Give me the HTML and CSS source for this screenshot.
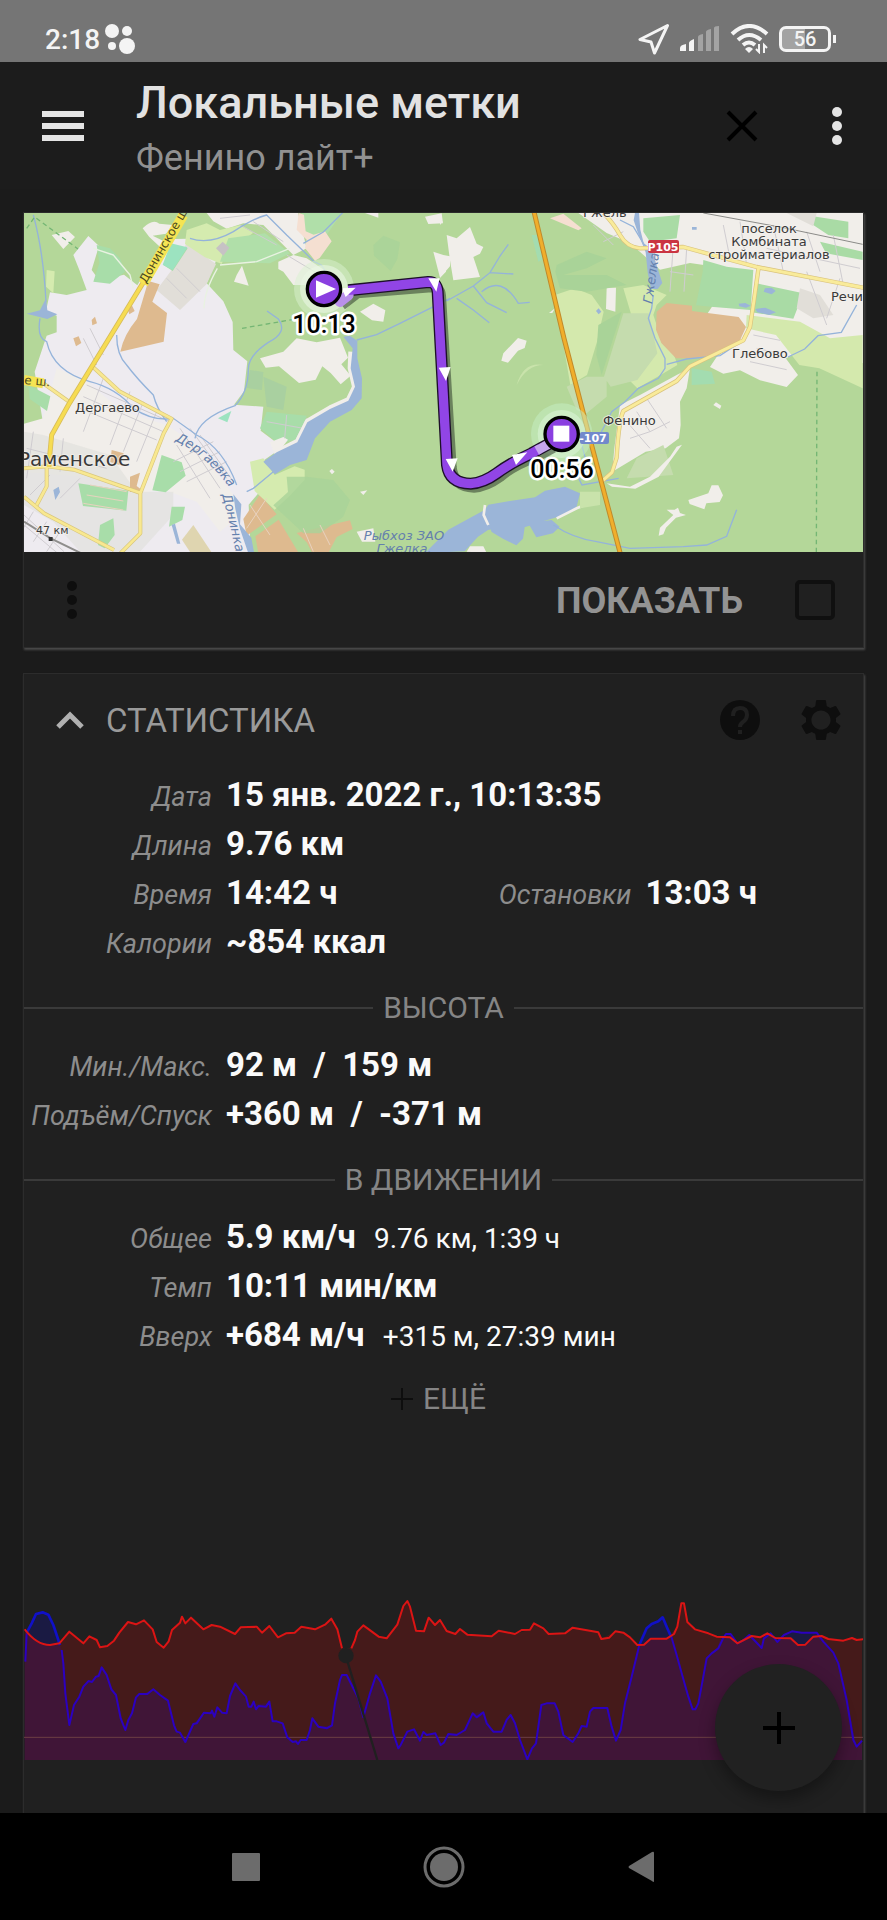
FILE: index.html
```html
<!DOCTYPE html>
<html lang="ru">
<head>
  <meta charset="UTF-8" />
  <meta name="viewport" content="width=device-width, initial-scale=1" />
  <title>Локальные метки</title>
  <link rel="stylesheet" href="styles.css">
</head>
<body>

  <div class="status-bar">
    <span class="clock">2:18</span>
    <svg class="dots" width="32" height="32" viewBox="0 0 32 32" fill="#f4f4f4">
      <circle cx="8" cy="8" r="7" />
      <circle cx="23" cy="8" r="5" />
      <circle cx="8" cy="23" r="4" />
      <circle cx="23" cy="23" r="8" />
    </svg>
    <div class="status-icons">
      <svg width="32" height="32" viewBox="0 0 32 32" fill="none" stroke="#f4f4f4" stroke-width="3" stroke-linejoin="round">
        <path d="M29.500 2.500 L2 16.500 L13 19 L16.500 30 Z" />
      </svg>
      <svg width="40" height="26" viewBox="0 0 40 26">
        <path d="M0 25v-3q0-3 6-4v7zM9 25v-8q0-2 5-4v12z" fill="#f4f4f4" />
        <path d="M18 25V11q0-2 5-3v17zM26 25V6q0-2 5-3v22zM34 25V2q0-2 5-2v25z" fill="#a3a3a3" />
      </svg>
      <svg width="39" height="30" viewBox="0 0 39 30" fill="none" stroke="#f4f4f4" stroke-width="4">
        <path d="M2 10Q19-6 37 10M8 16q11-10 23 0M13 21q6-5 12 0" />
        <path d="M15 25l4 4 4-4q-4-4-8 0z" fill="#f4f4f4" stroke="none" />
        <path d="M29 20v8l-3-3M34 29v-8l3 3" stroke-width="2" />
      </svg>
      <span class="battery">56</span>
    </div>
  </div>

  <header class="app-bar">
    <button class="icon-btn" aria-label="Меню">
      <svg width="42" height="30" viewBox="0 0 42 30" fill="#e4e4e4">
        <path d="M0 0h42v6H0zM0 12h42v6H0zM0 24h42v6H0z" />
      </svg>
    </button>
    <div class="titles">
      <h1>Локальные метки</h1>
      <p>Фенино лайт+</p>
    </div>
    <button class="icon-btn" aria-label="Закрыть">
      <svg width="32" height="32" viewBox="0 0 32 32" stroke="#000" stroke-width="4">
        <path d="M2 2l28 28M30 2L2 30" />
      </svg>
    </button>
    <button class="icon-btn" aria-label="Ещё">
      <svg width="10" height="38" viewBox="0 0 10 38" fill="#e4e4e4">
        <circle cx="5" cy="5" r="5" /><circle cx="5" cy="19" r="5" /><circle cx="5" cy="33" r="5" />
      </svg>
    </button>
  </header>

  <main>
    <section class="card map-card">
      <svg class="map" viewBox="0 0 839 339">
        <defs>
          <path id="derg" d="M151 228Q184 242 214 286" />
          <path id="don" d="M198 282Q206 310 214 350" />
        </defs>
        <g transform="translate(-4 -8) scale(0.33333)">
          <!-- forest -->
          <path fill="#b4d799" d="M0 0h2600v1060H0z" />
          <!-- town and fields in the west -->
          <path fill="#eeebf0" d="M90 262l50 8 60-15-22-60-18-45 45-57 32 30-22 72 22 30 75-16 40 32 30-50 50-88 70-2 88 62-30 72 50 54 28 62 2 84 42 34-10 90-30 40 88 6-8 72 66 50-50 34-38 28 20 70-34 40 6 150H12V664l58-4-26-160 36-108 30-10v-50l-32-14z" />
          <path fill="#f1eeea" d="M110 490l90 40 110 90 130 40 90 60 110 150 20 60-60 50-70-90-110-40-90 30-80-60-250-20V660l70-20z" />
          <path fill="#e0dfdb" d="M70 690l200 60 80 110 110 0 0 70-100 110H180l-80-90-88-50V680z" opacity=".6" />
          <path fill="#e1ded8" d="M500 115l88 62-28 60-80 78-70-60 45-60z" />
          <path fill="#f1eeea" d="M560 24l20 25 40 22 50-16 60 5 90 90 40-20-26-106zM95 90l50-12 20 18-35 36zM368 70q30-30 50-14l40 4-20 26-40 6 40 20-20 12-30-28z" />
          <path fill="#a8dda9" d="M230 120l40 10 30 30 15 40-45 36-50-6 18-56zM430 180l25-60 48 10-45 68z" />
          <path fill="#9ce3c0" d="M452 115l50 12-44 68-30-16z" />
          <path fill="#d5ebaf" d="M500 75l60-20 40 20 60-14 40 22-80 60-15 34-50-20-60-40zM80 195l24 4-4 66-22-20z" />
          <path fill="#b0dfa9" d="M625 100l110-15 75 60-60 30-150-5zM845 24h120l-55 80-60-15z" />
          <path fill="#c6c2c4" d="M588 130l20-20 20 18-18 24z" />
          <path fill="#f5dfd1" d="M836 24l-6 50 30 30-5 25 30 38 14-8 36-50-20-30-34 10-24-10-5-50z" />
          <path fill="#f1eeea" d="M775 170l45-20 40 10 60 40 20 20-40 20-80 0-30-40-15-8zM650 210l16-28 20 60-44-12zM720 460l70-20 40-40 60 12 70-14 24 60-20 20 28 34-30 26-30-34-25-20-20 40-50 10-60-50-40 4zM1020 320l40-24 36 20-6 34-34-4zM1240 140l30 10 20 4v30l-30 34zM1215 35l50-10 4 30-44 2zM1035 24h40v14z" />
          <path fill="#deba8f" d="M385 228l34 10-22 52 44 34-10 86-130 30q10-50 50-98zM160 400l16-6 8 20-16 10zM215 345l10-10 6 20-14 6zM322 310l12-12 10 20-16 10z" />
          <path fill="#deba8f" d="M330 815l30-12-10 40 20 16-40 2zM720 868l50 60-90 64-10-50zM706 994l70-50 60 100H715zM830 984l160-38 8 26-48 24-24 46-50 0-16-30zM275 735l36 10-10 36-30-10z" />
          <path fill="#a8dda9" d="M175 835l150 22-6 60-130-14zM25 540l66 34-10 44-52-36zM425 750l60 22 12 40-60 50-40-6zM455 905l40 0-8 40-40 20zM240 960l40-20 4 50-30 40-20-10zM740 620l120 12-24 70-60 14-56-46z" />
          <path fill="#9ce3c0" d="M594 640l40-22-12 34z" />
          <path fill="#dfd5b0" d="M520 960l56 84h-64l-26-40z" />
          <path fill="#d5ebaf" d="M690 770l40-10 34 50 60-26 30 10 0 30-46 50-44 40-60-56z" />
          <path fill="#a9d398" d="M800 815l60 0 80 10 50 60-20 50-70 50-50 0-90-84 44-40zM1060 120l30-28 50 20-8 50-20 36-50-46z" opacity=".8" />
          <path fill="#a9d0a0" d="M690 495l40 6-4 54-46-6zM730 515l70 30-10 70-50-10z" />
          <path fill="#f1eeea" d="M1020 860l22-4-12 14zM928 798l8-6 8 8-8 8zM750 712l40-16 14 8-38 50zM1010 980l50-10 6 40-40 0z" />

          <!-- street grid -->
          <g fill="none" stroke="#cfccd0" stroke-width="3">
            <path d="M200 540l250 110M190 575l240 105M180 610l230 95M330 560l-60 160M370 590l-60 150M410 620l-60 150M250 520l-60 160M480 670l120 180M510 670l110 150M540 690l100 140M460 770l120-60M480 800l120-60M500 830l120-60M470 720l100 160M40 680l-20 140M130 700l-10 100M20 730l240 60M30 870l60-60M120 880l60-60M190 400l40 80M210 370l40 80M440 220l60 60M470 190l70 70M860 640l-30 60M800 630l-6 70M740 650l110 20" />
            <path d="M12 930l120 110M12 960l100 84M40 920l-30 50M80 950l-40 60M120 980l-40 60M600 40l90-10M660 60l110 60M700 50l90 60M800 150l100 60" />
            <path d="M210 840l110 20M200 870l110 18M190 895l120 20M690 900l60 90M740 880l-60 90M850 970l30 70M900 960l30 60" stroke="#e8d2bf" />
          </g>
          <path fill="none" stroke="#8f8e8c" stroke-width="6" d="M12 950l80 50 90 44" />

          <!-- water -->
          <g fill="none" stroke="#94b3da" stroke-width="4">
            <path d="M40 30q30 110 38 260M60 340q-10 60 20 70 20 90 130 120 80 20 130 80 60 40 120 30l70 50q80 40 120 150M290 390q0 60 30 90 30 40 80 90 10 40 40 80M525 700q10-60 120-98 40-40 40-110 0-40 60-80 60-30 30-70l-34-24M510 100q60 20 130-20 60-40 100-50l60 60 46 44 36 36 22 10 40 60M850 115l60-34 60-60M1010 405l60-16 70-34 90-45 60-30M760 800l-60 50-20 10" />
          </g>
          <path fill="none" stroke="#f1eeea" stroke-width="14" stroke-linejoin="round" d="M992 440L990 490 1003 545 985 583 930 608 862 648 832 708 770 740" />
          <path fill="#9bb5d8" d="M970 395L990 392 1012 408 1012 460 1026 520 1025 580 995 615 930 650 885 700 860 765 810 780 765 808 730 770 770 742 832 712 862 652 930 612 985 587 1005 545 992 490 998 430z" />
          <path fill="#9bb5d8" d="M78 280l4 36 30 12-30 14-62-16 40-10zM640 868l24 30-4 60 34 40 8 44h-18l-24-70-14-60zM100 855l16-10 4 16-14 24zM455 960l10-4 16 60-10 0z" />
          <path fill="#9bb5d8" d="M1215 1044l70-70 110-60 10-15 60-10 80-12 30-20 60-12 45 20-10 40-26 22-70 20-60 20-20-6-40 4-50 10-30 20-40 44zM1405 955l50-10 60 16-6 40-20 20-40-20-34-20zM1525 955l70-10 24 20-20 20-50 12z" />
          <path fill="none" stroke="#f1eeea" stroke-width="8" d="M1395 900l-4 30 14 30M1610 940l60-30 50-20" />

          <!-- eastern half -->
          <g transform="translate(1260 0)">
            <path fill="#f1eeea" d="M20 90l30 10 40-34 20 50 20 10-10 20-20 10 20 60-80 10-10-60zM190 445l44-46 26 8-6 22-20 8-30 36-20-6zM415 24h400l455 0v450h-30l-80-60-60 40-30-10-60 30-40-30-120-10-80-60 120-180-140-20-90 20-90-80-70-30zM500 248l28 0-2 72-28-8z" />
            <path fill="#f1eeea" d="M540 600l60-30 110-60 40-20-10 60-20 40 2 70-5 40-40 30-60 10-100 60 6-70z" />
            <path fill="#f1eeea" d="M900 400l40-30 90 20 0 60 44 60-34 36-80-20-60-30-50 10-40-20 20-30z" />
            <path fill="#d4e9ad" d="M345 270l60-20 50 20 36 50-20 90-30 100-50 30zM550 250l60-10 70 30-30 30-10 30 20 60 36 40 16 50-50 30-70 40-60-60 60-100zM920 330l160 20 90 50 98-10v160l-130-60-60-10-70-90-90-20z" />
            <path fill="#a9dba5" d="M790 165l70 20 80 10-8 120-120-10-44-4 20-100zM950 235l140 30-30 76-130-20zM610 40l110-10-10 70-80 10-20-30zM1095 30l130 20 0 50-60-10-60-40zM1140 110l128 30v25l-110-20z" />
            <path fill="#c5dcae" d="M550 325l76 0 26 120-60 80-80 20-20-30zM380 545l60-30 60 0 0 60-60 50-30-10zM590 760l80-40 30 90-140 10z" />
            <path fill="#a9d398" d="M475 360l70-40-60 190-16-60zM350 180l90-40 60 20-60 30-70 20 130 0 60 30-120 20-80-10-14-50z" />
            <path fill="#a3dcb0" d="M755 490l60 10 10 36-70 4zM275 90l20 0 20 70-20 10z" />
            <path fill="#f5dfd1" d="M330 40l40-14 55 44-10 6z" />
            <path fill="#deba8f" d="M650 320l30-26 76 8v16l140 18 22 30-20 44-100 50-90 0-44-46-16-40z" />
            <path fill="#e1ded8" d="M1040 24h90l-10 40zM1080 250l60 20 40 60-60 10-50-30z" />
            <path fill="#f1eeea" d="M745 885l60-20 10-24 20 0 14 30-10 20-40 4-6 18-44-16zM680 914l24 0 10-6 6 16 18 6-30 8-30 30-8 20-14 4 4-24 40-38zM820 600l8-8 16 10-4 10zM500 835l70 10 60-30 60-60 20-30 16-6-70 96-70 36-70-6zM80 1040l10-16 40 0 10 20zM0 40l8 10-8 10zM0 160l16 0 2 40-18 18zM345 310l-8 14-10 0z" />
            <path fill="#c9e3ab" d="M230 540q20-70 80-60-50 0-80 60zM420 860l60 0 0 40-60 10z" />

            <g fill="none" stroke="#cfccd0" stroke-width="3">
              <path d="M700 120l-10 140M740 130l-8 130M690 200l70 10M460 60l60 60M490 110l60-30M850 60l20 100M900 50l20 130M1000 60l30 140M1100 80l40 120M1180 90l30 150M980 130l280 60M1100 200l60 160M1200 220l-40 120M940 390l80 16M950 430l70 16M930 470l110 24M590 620l40 60 60-30M560 650l70 80M620 580l60 90M570 700l60-20" />
            </g>
            <path fill="none" stroke="#8b8b88" stroke-width="3" d="M790 24l240 44 238 50" />

            <g fill="none" stroke="#94b3da" stroke-width="4">
              <path d="M20 288l80-45 50-40 30-50 25-35M150 203l70 4M100 243l40 50 60 30M125 260q60-50 110 35l34-3M50 280l50 35 48 38M540 45l40 20 30 50M640 270l-5 40-10 30 20 60 30 60 0 30-20 30-60 30-40 40-40 30-20 40-16 30M680 478l60-16 100-10 60-40M1250 300l-46 82-70 10-40 40-50 24M420 700l16 60-20 60 10 20 110-20M340 960q60 40 130 50l100 20 160-5 70-5 60-26 30-80" />
            </g>
            <path fill="#9bb5d8" d="M585 24h12l4 50 10 40 24 20 32 100-14 18-20 0-10-50-6-60-24-60-12-36zM975 250l20-2 12 10-12 10-24-8zM896 296l20-2 16 8-14 6-20-4zM946 312l30-4 32 14-20 8-36-8zM468 318l8-8 8 10-8 8zM756 66h14v8h-14z" />

            <!-- roads -->
            <g fill="none" stroke-linejoin="round">
              <path stroke="#d9c27c" stroke-width="13" d="M490 24q30 30 50 66 20 36 60 40l130-4 220 60 320 62M956 186l-14 100-12 80-20 40-160 78-40 44-160 90q-14 30-20 140l-14 44-34 30" />
              <path stroke="#f9eb9a" stroke-width="9" d="M490 24q30 30 50 66 20 36 60 40l130-4 220 60 320 62M956 186l-14 100-12 80-20 40-160 78-40 44-160 90q-14 30-20 140l-14 44-34 30" />
              <path stroke="#c08a2b" stroke-width="15" d="M282 20l90 380 80 310 90 340" />
              <path stroke="#f0ae2c" stroke-width="9" d="M282 20l90 380 80 310 90 340" />
              <path stroke="#74b674" stroke-width="4" stroke-dasharray="14 10" d="M1131 500l-2 544" />
            </g>
          </g>

          <g fill="none" stroke-linejoin="round">
            <path stroke="#d9c67c" stroke-width="12" d="M70 535l78 56M218 485l80 74 157 82-24 44-70 180 0 120-60 60M12 790l70-6 80 10 200 70M12 875l60 50 210 110M80 784l0 60-30 56" />
            <path stroke="#f8e890" stroke-width="8" d="M70 535l78 56M218 485l80 74 157 82-24 44-70 180 0 120-60 60M12 790l70-6 80 10 200 70M12 875l60 50 210 110M80 784l0 60-30 56" />
            <path stroke="#d8bd5a" stroke-width="15" d="M370 232L148 595 95 690 86 785" />
            <path stroke="#f6dc52" stroke-width="10" d="M370 232L148 595 95 690 86 785" />
            <path stroke="#f5e453" stroke-width="30" d="M370 236L490 30M12 525l58 10" />
            <path stroke="#74b674" stroke-width="4" stroke-dasharray="14 10" d="M20 70l24-34 130 96M666 370l150-26" />
            <path stroke="#e9f2e2" stroke-width="4" d="M600 180l110-10 100-40M552 310q0-50 40-120M220 130l60 20 50 60 10 40" />
          </g>

          <!-- track -->
          <circle cx="912" cy="252" r="90" fill="#d9f2cf" opacity=".5" />
          <circle cx="912" cy="252" r="72" fill="#e9f6e4" opacity=".6" />
          <circle cx="1625" cy="687" r="92" fill="#c5efc5" opacity=".5" />
          <circle cx="1625" cy="687" r="72" fill="#d9f4d6" opacity=".6" />
          <g fill="none" stroke-linejoin="round">
            <path stroke="#3b4a35" stroke-opacity=".6" stroke-width="32" d="M965 300L1012 264 1234 246Q1260 246 1262 272L1294 786Q1300 845 1362 847 1400 844 1440 815 1480 780 1550 755L1600 728" />
            <path stroke="#1d1029" stroke-width="36" d="M985 256L1225 231Q1250 230 1253 260L1281 780Q1288 835 1352 836 1390 834 1430 805 1470 775 1535 745L1590 715" />
            <path stroke="#b990ea" stroke-width="32" stroke-linecap="round" d="M960 290L985 270" />
            <path stroke="#9145e6" stroke-width="28" d="M985 256L1225 231Q1250 230 1253 260L1281 780Q1288 835 1352 836 1390 834 1430 805 1470 775 1535 745L1560 731" />
            <path stroke="#c6a5ee" stroke-width="28" d="M1550 737L1590 715" />
          </g>
          <path fill="#fff" d="M965 250l42-2-30 28zM1225 220l34 0-10 40zM1256 488l36-2-14 42zM1277 762l36-2-15 40zM1476 750l46-8-34 38z" />
          <circle cx="912" cy="252" r="50" fill="#8a3fe0" stroke="#000" stroke-width="10" />
          <path fill="#fff" d="M888 226l60 26-60 26z" />
          <circle cx="1625" cy="687" r="50" fill="#8a3fe0" stroke="#000" stroke-width="10" />
          <path fill="#fff" d="M1600 662h48v48h-48z" />
          <path fill="#333" d="M86 996h12v12h-12z" />
        </g>

        <g class="road-sign">
          <rect x="624" y="27" width="31" height="13" rx="2" fill="#ca3442" />
          <text x="639" y="38" text-anchor="middle">Р105</text>
          <rect x="556" y="219" width="29" height="12" rx="2" fill="#7289cb" />
          <text x="569" y="229" text-anchor="middle">-107</text>
        </g>
        <g class="place">
          <text x="51" y="199">Дергаево</text>
          <text x="708" y="145">Глебово</text>
          <text x="579" y="212">Фенино</text>
          <text x="807" y="88">Речи</text>
          <text x="559" y="4">Гжель</text>
          <text x="745" y="20" text-anchor="middle">поселок</text>
          <text x="745" y="33" text-anchor="middle">Комбината</text>
          <text x="745" y="46" text-anchor="middle">стройматериалов</text>
          <text class="km" x="12" y="321">47 км</text>
          <text class="town" x="-6" y="253">Раменское</text>
        </g>
        <g class="road-name">
          <text transform="translate(122 71) rotate(-60)">Донинское ш.</text>
          <text transform="translate(0 171) rotate(5)">е ш.</text>
        </g>
        <g class="river">
          <text><textPath href="#derg">Дергаевка</textPath></text>
          <text><textPath href="#don">Донинка</textPath></text>
          <text transform="translate(628 91) rotate(-82)">Гжелка</text>
          <text x="380" y="327" text-anchor="middle">Рыбхоз ЗАО</text>
          <text x="380" y="340" text-anchor="middle">Гжелка.</text>
        </g>
        <g class="time">
          <text x="300" y="120">10:13</text>
          <text x="538" y="265">00:56</text>
        </g>
      </svg>
      <div class="map-actions">
        <button class="icon-btn" aria-label="Действия">
          <svg width="10" height="38" viewBox="0 0 10 38" fill="#0e0e0e">
            <circle cx="5" cy="5" r="5" /><circle cx="5" cy="19" r="5" /><circle cx="5" cy="33" r="5" />
          </svg>
        </button>
        <label for="show">ПОКАЗАТЬ</label>
        <input type="checkbox" id="show" />
      </div>
    </section>

    <section class="card stats">
      <div class="stats-head">
        <button class="collapse">
          <svg width="28" height="18" viewBox="0 0 28 18" fill="none" stroke="#b0b0b0" stroke-width="5">
            <path d="M2 16L14 4l12 12" />
          </svg>
          СТАТИСТИКА
        </button>
        <button class="icon-btn" aria-label="Справка">
          <svg width="42" height="42" viewBox="0 0 42 42">
            <circle cx="21" cy="21" r="20" fill="#0e0e0e" />
            <path d="M14 17q0-8 7-8t7 7q0 4-4 7-3 2-3 5" fill="none" stroke="#202020" stroke-width="4" />
            <path d="M19 31h4v4h-4z" fill="#202020" />
          </svg>
        </button>
        <button class="icon-btn" aria-label="Настройки">
          <svg width="48" height="48" viewBox="0 0 24 24" fill="#0e0e0e">
            <path d="M19.430 12.980c.04-.32.07-.64.07-.98s-.03-.66-.07-.98l2.110-1.650c.19-.15.24-.42.12-.64l-2-3.460c-.12-.22-.39-.3-.61-.22l-2.490 1c-.52-.4-1.080-.73-1.690-.98l-.38-2.650C14.460 2.180 14.250 2 14 2h-4c-.25 0-.46.18-.49.42l-.38 2.650c-.61.25-1.170.59-1.690.98l-2.490-1c-.23-.09-.49 0-.61.22l-2 3.460c-.13.22-.07.49.12.64l2.110 1.650c-.04.32-.07.65-.07.98s.03.66.07.98l-2.110 1.650c-.19.15-.24.42-.12.64l2 3.460c.12.22.39.3.61.22l2.490-1c.52.4 1.080.73 1.690.98l.38 2.650c.03.24.24.42.49.42h4c.25 0 .46-.18.49-.42l.38-2.650c.61-.25 1.170-.59 1.690-.98l2.490 1c.23.09.49 0 .61-.22l2-3.460c.12-.22.07-.49-.12-.64l-2.110-1.650zM12 16.800c-2.600 0-4.800-2.200-4.800-4.800s2.200-4.800 4.800-4.800 4.800 2.200 4.800 4.800-2.200 4.800-4.800 4.800z" />
          </svg>
        </button>
      </div>

      <dl>
        <div class="row"><dt>Дата</dt><dd>15 янв. 2022 г., 10:13:35</dd></div>
        <div class="row"><dt>Длина</dt><dd>9.76 км</dd></div>
        <div class="pair">
          <div class="row"><dt>Время</dt><dd>14:42 ч</dd></div>
          <div class="row"><dt>Остановки</dt><dd>13:03 ч</dd></div>
        </div>
        <div class="row"><dt>Калории</dt><dd>~854 ккал</dd></div>
      </dl>

      <h2>ВЫСОТА</h2>
      <dl>
        <div class="row"><dt>Мин./Макс.</dt><dd>92 м&nbsp; /&nbsp; 159 м</dd></div>
        <div class="row"><dt>Подъём/Спуск</dt><dd>+360 м&nbsp; /&nbsp; -371 м</dd></div>
      </dl>

      <h2>В ДВИЖЕНИИ</h2>
      <dl>
        <div class="row"><dt>Общее</dt><dd>5.9 км/ч <small>9.76 км, 1:39 ч</small></dd></div>
        <div class="row"><dt>Темп</dt><dd>10:11 мин/км</dd></div>
        <div class="row"><dt>Вверх</dt><dd>+684 м/ч <small>+315 м, 27:39 мин</small></dd></div>
      </dl>

      <button class="more">
        <svg width="22" height="22" viewBox="0 0 22 22" stroke="#0e0e0e" stroke-width="2">
          <path d="M11 0v22M0 11h22" />
        </svg>
        ЕЩЁ
      </button>

      <svg class="chart" viewBox="0 0 839 170">
        <g transform="translate(-24 -10) scale(0.33333)" stroke-width="6" stroke-linejoin="round">
          <!-- speed -->
          <path fill="#00f" fill-opacity=".16" d="M74 540V245L80 160 108 102 128 96 145 104 160 135 185 210 208 435 222 375 250 320 288 290 305 262 348 345 376 450 408 352 460 328 504 362 530 455 556 486 580 432 612 398 680 400 690 348 706 310 746 376 808 368 818 424 848 430 866 476 894 490 920 478 937 415 955 440 996 436 1005 370 1026 285 1040 285 1075 355 1090 412 1110 340 1128 286 1142 305 1162 355 1180 460 1195 505 1222 455 1242 448 1260 482 1306 460 1322 495 1345 462 1390 455 1418 400 1450 395 1475 450 1505 455 1532 405 1556 465 1582 538 1608 490 1624 375 1664 368 1692 465 1718 486 1765 436 1774 385 1822 384 1848 482 1865 440 1886 330 1912 220 1945 140 1988 112 2030 225 2080 390 2095 370 2122 230 2150 208 2165 165 2190 162 2210 190 2248 165 2285 202 2305 160 2332 186 2376 154 2450 158 2510 235 2548 395 2570 500 2586 480V540z" />
          <!-- altitude -->
          <path fill="#f00" fill-opacity=".17" d="M74 540V148Q110 195 150 195L178 190 208 155 250 190 268 169 290 180 300 202 322 198 342 182 384 126 408 133 432 121 458 148 470 186 491 203 506 184 516 150 540 128 546 110 556 130 573 113 610 148 635 135 660 140 705 162 722 142 770 140 786 158 808 138 834 172 858 160 884 158 904 140 945 148 975 134 994 116 1012 148 1026 205 1054 205 1072 155 1090 136 1136 170 1160 175 1192 134 1210 78 1222 63 1236 100 1248 152 1272 154 1286 113 1305 135 1320 120 1345 155 1366 162 1380 147 1402 164 1475 169 1496 152 1545 162 1590 149 1602 130 1646 162 1695 160 1718 143 1795 157 1804 177 1846 154 1870 158 1912 195 1932 194 1952 176 2000 176 2032 140 2044 70 2052 70 2062 126 2085 148 2150 170 2190 172 2212 190 2255 168 2280 172 2302 160 2326 174 2372 175 2394 195 2416 194 2440 170 2465 168 2485 177 2530 182 2556 174 2586 178V540z" />
          <path fill="none" stroke="#6b3f44" stroke-width="3" d="M72 472H2590" />
          <path fill="none" stroke="#2b00c0" d="M76 245L80 160M185 210L190 250 196 340 208 435 222 375 238 350 250 320 266 303 276 306 288 290 296 288 305 262 320 285 334 328 348 345 362 415 376 450 385 420 396 400 408 352 418 342 442 342 460 328 480 345 504 362 522 436 530 455 540 458 556 486 580 432 590 430 612 398 632 400 636 392 643 410 652 382 666 398 680 400 690 348 706 310 720 330 738 350 746 380 754 380 761 365 768 388 776 378 798 380 808 365 818 424 830 424 848 430 862 472 878 486 888 484 894 492 902 480 920 480 930 450 937 415 955 440 980 445 996 436 1005 370 1020 300 1026 285 1040 285 1055 315 1075 355 1090 412 1110 340 1128 286 1142 305 1162 355 1180 460 1195 505 1202 495 1222 455 1242 448 1260 482 1270 456 1280 465 1306 460 1322 495 1332 488 1345 462 1370 465 1395 450 1418 400 1430 412 1450 397 1460 430 1480 455 1505 455 1520 420 1532 405 1545 430 1560 480 1582 538 1596 505 1608 490 1624 375 1640 370 1664 370 1675 395 1690 465 1718 486 1735 460 1745 438 1760 440 1770 395 1780 384 1822 384 1835 440 1848 482 1862 450 1875 370 1895 290 1918 195M2014 170L2030 225 2048 290 2065 350 2078 388 2086 388 2095 370 2110 290 2120 235 2135 220 2155 205 2168 178" />
          <path fill="none" stroke="#1010c8" stroke-width="8" d="M80 158L95 130 108 102 128 97 145 104 160 135 180 195M1918 195L1940 145 1955 132 1975 124 1988 112 2000 140 2014 172" />
          <path fill="none" stroke="#2b00c0" d="M2168 178L2178 162 2192 162 2212 190 2228 182 2248 165 2285 204 2292 175 2312 160 2332 186 2352 165 2376 154 2405 158 2450 158 2470 185 2500 218 2515 250 2540 360 2560 480 2570 500 2586 482" />
          <path fill="none" stroke="#dc1414" d="M74 148Q110 195 150 195L178 190 208 155 250 190 268 169 290 180 300 202 322 198 342 182 358 158 384 126 408 133 432 121 458 148 470 186 491 203 506 184 516 150 540 128 546 110 556 130 573 113 610 148 635 135 660 140 705 162 722 142 770 140 786 158 808 138 834 172 858 160 884 158 904 140 945 148 975 134 994 116 1012 148 1026 205M1054 205L1065 180 1072 155 1090 136 1136 170 1160 175 1192 134 1210 78 1222 63 1230 80 1248 152 1272 154 1286 113 1305 135 1320 120 1340 153 1366 162 1380 147 1402 164 1475 169 1496 152 1545 162 1565 150 1590 149 1602 130 1630 145 1646 162 1695 160 1718 143 1795 157 1804 177 1828 173 1846 154 1870 158 1890 172 1912 195 1932 194 1952 176 2000 176 2022 162 2032 140 2044 70 2052 70 2062 126 2085 148 2125 160 2150 170 2190 172 2212 190 2255 168 2280 172 2302 160 2326 174 2372 175 2394 195 2416 194 2440 170 2465 168 2485 177 2530 182 2556 174 2570 180 2590 178" />
          <path stroke="#202020" stroke-width="7" d="M1038 230L1132 540" />
          <circle cx="1038" cy="227" r="23" fill="#202020" />
        </g>
      </svg>
    </section>

    <button class="fab" aria-label="Добавить">
      <svg width="32" height="32" viewBox="0 0 32 32" stroke="#000" stroke-width="4">
        <path d="M16 0v32M0 16h32" />
      </svg>
    </button>
  </main>

  <nav class="system-nav">
    <button aria-label="Недавние">
      <svg width="42" height="42" viewBox="0 0 42 42" fill="#6c6c6c"><rect x="7" y="7" width="28" height="28" rx="1" /></svg>
    </button>
    <button aria-label="Домой">
      <svg width="42" height="42" viewBox="0 0 42 42" fill="#6c6c6c">
        <circle cx="21" cy="21" r="14" />
        <circle cx="21" cy="21" r="19" fill="none" stroke="#6c6c6c" stroke-width="3" />
      </svg>
    </button>
    <button aria-label="Назад">
      <svg width="42" height="42" viewBox="0 0 42 42" fill="#6c6c6c"><path d="M33 7v28q0 2-2 0L8 22q-1-1 0-2L31 6q2-1 2 1z" /></svg>
    </button>
  </nav>

</body>
</html>
```

FILE: styles.css
```css
/* Base */
* {
  box-sizing: border-box;
}
body {
  margin: 0;
  min-height: 100vh;
  display: flex;
  flex-direction: column;
  background: #1b1b1b;
  color: #fafafa;
  font-family: Roboto, "Open Sans", sans-serif;
}
button {
  border: none;
  background: none;
  padding: 0;
  color: inherit;
  font: inherit;
  cursor: pointer;
}
svg {
  display: block;
  flex: none;
}

/* Status bar */
.status-bar {
  display: flex;
  align-items: center;
  height: 62px;
  padding: 16px 56px 0 45px;
  background: #757575;
  color: #f4f4f4;
}
.clock {
  font-size: 28px;
  font-weight: 500;
}
.dots {
  margin-left: 4px;
}
.status-icons {
  display: flex;
  align-items: center;
  gap: 10px;
  margin-left: auto;
}
.battery {
  position: relative;
  width: 52px;
  height: 26px;
  border: 3px solid #f4f4f4;
  border-radius: 7px;
  background: linear-gradient(90deg, #a3a3a3 50%, transparent 50%);
  font-size: 20px;
  font-weight: 500;
  line-height: 20px;
  text-align: center;
}
.battery::after {
  content: "";
  position: absolute;
  right: -8px;
  top: 6px;
  width: 3px;
  height: 8px;
  background: #f4f4f4;
}

/* App bar */
.app-bar {
  display: flex;
  align-items: center;
  height: 127px;
  padding: 0 31px 0 42px;
  background: #1c1c1c;
}
.icon-btn {
  display: flex;
  align-items: center;
  justify-content: center;
  min-width: 38px;
}
.titles {
  flex: 1;
  margin-left: 52px;
  padding-top: 8px;
}
h1 {
  margin: 0;
  font-size: 45px;
  font-weight: 500;
  line-height: 56px;
  color: #e2e2e2;
}
.titles p {
  margin: 0;
  font-size: 36px;
  line-height: 54px;
  color: #919191;
}
.app-bar .icon-btn:last-child {
  margin-left: 57px;
}

/* Cards */
main {
  position: relative;
  flex: 1;
  display: flex;
  flex-direction: column;
  gap: 27px;
  padding: 24px 24px 0;
}
.card {
  background: #202020;
  box-shadow: 0 0 0 1px #2c2c2c, 1px 2px 2px 1px #4a4a4a;
}
.map {
  width: 100%;
  height: auto;
  overflow: hidden;
}
.map-actions {
  display: flex;
  align-items: center;
  height: 95px;
  padding: 0 28px 0 29px;
}
.map-actions label {
  margin-left: auto;
  padding-top: 2px;
  font-size: 36px;
  font-weight: 700;
  color: #939393;
}
.map-actions input {
  appearance: none;
  width: 40px;
  height: 40px;
  margin: 0 0 0 52px;
  border: 4px solid #101010;
  border-radius: 5px;
}

/* Map labels */
.map text {
  font-family: "DejaVu Sans", "Noto Sans", sans-serif;
  font-size: 13px;
  paint-order: stroke;
  stroke-linejoin: round;
}
.place text {
  fill: #3a3a3a;
  stroke: #f4f2ee;
  stroke-opacity: 0.7;
  stroke-width: 2px;
}
.map .town {
  font-size: 20px;
}
.map .km {
  font-size: 11px;
}
.map .road-name text {
  fill: #4c4a20;
  font-size: 12px;
}
.map .river text {
  fill: #6480ad;
  font-style: italic;
}
.map .road-sign text {
  fill: #fff;
  font-size: 11px;
  font-weight: 700;
}
.map .time text {
  fill: #000;
  stroke: #fff;
  stroke-width: 5px;
  font-family: Roboto, sans-serif;
  font-size: 25px;
  font-weight: 500;
  text-anchor: middle;
}

/* Statistics */
.stats {
  flex: 1;
}
.stats-head {
  display: flex;
  align-items: center;
  height: 92px;
  margin-bottom: 4px;
  padding: 0 18px 0 32px;
}
.stats-head .icon-btn {
  margin-left: 36px;
}
.collapse {
  display: flex;
  align-items: center;
  gap: 22px;
  margin-right: auto;
  font-size: 33px;
  color: #9a9a9a;
}
dl {
  margin: 0;
}
.row {
  flex: 1;
  display: flex;
  align-items: baseline;
  gap: 14px;
  height: 49px;
  line-height: 49px;
}
.pair {
  display: flex;
}
dt {
  width: 188px;
  text-align: right;
  white-space: nowrap;
  font-size: 27px;
  font-style: italic;
  color: #8d8d8d;
}
dd {
  margin: 0;
  font-size: 33px;
  font-weight: 700;
}
dd small {
  margin-left: 10px;
  font-size: 28px;
  font-weight: 400;
}
h2 {
  display: flex;
  align-items: center;
  gap: 10px;
  margin: 20px 0 10px;
  font-size: 30px;
  font-weight: 400;
  line-height: 44px;
  color: #858585;
}
h2::before,
h2::after {
  content: "";
  flex: 1;
  height: 2px;
  background: #3a3a3a;
}
.more {
  display: flex;
  align-items: center;
  gap: 10px;
  margin: 18px auto 0;
  padding-right: 10px;
  font-size: 30px;
  line-height: 44px;
  color: #858585;
}
.chart {
  width: 100%;
  height: auto;
  margin-top: 169px;
}

/* Floating button */
.fab {
  position: absolute;
  right: 45px;
  bottom: 22px;
  width: 127px;
  height: 127px;
  display: flex;
  align-items: center;
  justify-content: center;
  border-radius: 50%;
  background: #212121;
  box-shadow: 0 8px 16px rgba(0, 0, 0, 0.35);
}

/* System navigation */
.system-nav {
  position: relative;
  display: flex;
  justify-content: center;
  align-items: center;
  gap: 156px;
  height: 107px;
  background: #000;
}
```
